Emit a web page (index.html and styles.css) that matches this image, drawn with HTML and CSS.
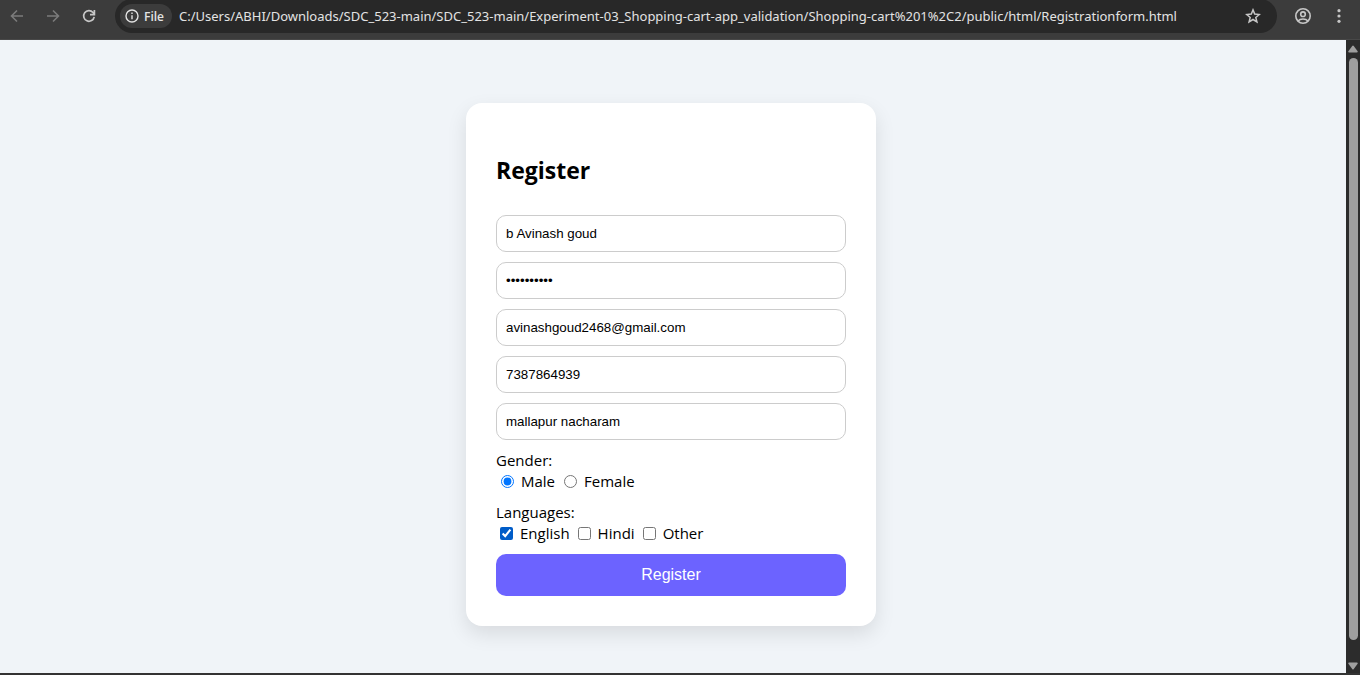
FILE: index.html
```html
<!DOCTYPE html>
<html lang="en">
<head>
<meta charset="utf-8">
<title>Register</title>
<link rel="stylesheet" href="styles.css">
</head>
<body>
<header class="toolbar">
  <button class="icon-button dim" type="button" aria-label="Back">
    <svg width="16" height="16" viewBox="0 0 16 16" fill="none" stroke="currentColor" stroke-width="1.6"><path d="M14 8H3M8 2.5 2.5 8 8 13.5"/></svg>
  </button>
  <button class="icon-button dim" type="button" aria-label="Forward">
    <svg width="16" height="16" viewBox="0 0 16 16" fill="none" stroke="currentColor" stroke-width="1.6"><path d="M2 8h11M8 2.5 13.5 8 8 13.5"/></svg>
  </button>
  <button class="icon-button" type="button" aria-label="Reload">
    <svg width="16" height="16" viewBox="0 0 16 16" fill="none" stroke="currentColor" stroke-width="1.7"><path d="M13.2 8.8A5.3 5.3 0 1 1 12 4.5L13.5 6.2M13.4 2v4.6H9"/></svg>
  </button>
  <div class="address">
    <button class="chip" type="button">
      <svg width="14" height="14" viewBox="0 0 14 14" fill="none" stroke="currentColor" stroke-width="1.4"><circle cx="7" cy="7" r="6"/><path d="M7 6.2v4M7 3.6v1.5"/></svg>
      File
    </button>
    <input class="url" type="text" aria-label="Address" value="C:/Users/ABHI/Downloads/SDC_523-main/SDC_523-main/Experiment-03_Shopping-cart-app_validation/Shopping-cart%201%2C2/public/html/Registrationform.html">
    <button class="icon-button star" type="button" aria-label="Bookmark">
      <svg width="16" height="16" viewBox="0 0 16 16" fill="none" stroke="currentColor" stroke-width="1.5"><path d="m8 1.9 1.7 4.2 4.6.4-3.5 3 1.1 4.4L8 11.5l-3.9 2.4 1.1-4.4-3.5-3 4.6-.4z"/></svg>
    </button>
  </div>
  <button class="icon-button" type="button" aria-label="Profile">
    <svg width="18" height="18" viewBox="0 0 18 18" fill="none" stroke="currentColor" stroke-width="1.6"><circle cx="9" cy="9" r="7.2"/><circle cx="9" cy="7.2" r="2.3"/><path d="M4 14c2.4-2.7 7.600-2.700 10 0"/></svg>
  </button>
  <button class="icon-button" type="button" aria-label="Menu">
    <svg width="16" height="16" viewBox="0 0 16 16" fill="currentColor"><circle cx="8" cy="2.700" r="1.600"/><circle cx="8" cy="8" r="1.600"/><circle cx="8" cy="13.300" r="1.600"/></svg>
  </button>
</header>
<div class="viewport">
  <main class="page">
    <form class="card">
      <h2 class="title">Register</h2>
      <input class="field" type="text" aria-label="Name" value="b Avinash goud">
      <input class="field" type="password" aria-label="Password" value="abcdefghij">
      <input class="field" type="email" aria-label="Email" value="avinashgoud2468@gmail.com">
      <input class="field" type="tel" aria-label="Phone" value="7387864939">
      <input class="field" type="text" aria-label="Address" value="mallapur nacharam">
      <div class="group" role="radiogroup" aria-labelledby="gender">
        <div id="gender">Gender:</div>
        <div class="choices">
          <label class="choice"><input class="radio" type="radio" name="gender" checked>Male</label>
          <label class="choice"><input class="radio" type="radio" name="gender">Female</label>
        </div>
      </div>
      <div class="group" role="group" aria-labelledby="languages">
        <div id="languages">Languages:</div>
        <div class="choices">
          <label class="choice"><input class="check" type="checkbox" checked>English</label>
          <label class="choice"><input class="check" type="checkbox">Hindi</label>
          <label class="choice"><input class="check" type="checkbox">Other</label>
        </div>
      </div>
      <button class="submit" type="submit">Register</button>
    </form>
  </main>
  <div class="scrollbar" aria-hidden="true">
    <svg width="10" height="8" viewBox="0 0 10 8" fill="#9f9f9f"><path d="M4.200 1q.8-1 1.600 0l3.800 5.200q.6 1.300-.8 1.300H1.200Q-.2 7.500.4 6.200z"/></svg>
    <div class="track"><div class="thumb"></div></div>
    <svg width="10" height="8" viewBox="0 0 10 8" fill="#9f9f9f"><path d="M4.200 7q.8 1 1.600 0l3.800-5.200q.6-1.300-.8-1.300H1.200Q-.2.500.4 1.800z"/></svg>
  </div>
</div>
</body>
</html>
```
FILE: styles.css
```css
* {
  box-sizing: border-box;
}

body {
  margin: 0;
  min-height: 100vh;
  display: flex;
  flex-direction: column;
  font-family: "Open Sans", "Noto Sans", sans-serif;
  font-size: 15px;
  line-height: 21px;
  color: #000;
  background: #f0f4f8;
  border-bottom: 2px solid #333;
}

.toolbar {
  display: flex;
  align-items: center;
  gap: 12px;
  height: 40px;
  padding: 0 9px 7px 5px;
  background: #3c3c3c;
  border-bottom: 1px solid #484848;
}

.icon-button {
  display: flex;
  align-items: center;
  justify-content: center;
  width: 24px;
  height: 24px;
  padding: 0;
  border: 0;
  background: none;
  color: #c7c7c7;
}

.dim {
  color: #7b7b7b;
}

.address {
  flex: 1;
  display: flex;
  align-items: center;
  height: 34px;
  margin: 0 2px;
  padding: 0 12px 0 5px;
  border-radius: 17px;
  background: #282828;
}

.chip {
  display: flex;
  align-items: center;
  gap: 5px;
  height: 24px;
  padding: 0 8px 0 5px;
  border: 0;
  border-radius: 12px;
  background: #3c3c3c;
  color: #e3e3e3;
  font: 600 12px "Open Sans", "Noto Sans", sans-serif;
}

.url {
  flex: 1;
  min-width: 0;
  padding: 0 7px;
  border: 0;
  background: none;
  color: #e3e3e3;
  font: 13px "Noto Sans", "Open Sans", sans-serif;
}

.viewport {
  flex: 1;
  display: flex;
}

.page {
  flex: 1;
  display: flex;
  justify-content: center;
  align-items: flex-start;
  padding: 63px 24px 47px 20px;
}

.card {
  width: 100%;
  max-width: 410px;
  display: flex;
  flex-direction: column;
  gap: 10px;
  padding: 30px;
  border-radius: 16px;
  background: #fff;
  box-shadow: 0 8px 20px rgba(0, 0, 0, 0.1);
}

.title {
  margin: 20px 0 18px;
  font-size: 23px;
  line-height: 34px;
  font-weight: 700;
}

.field {
  width: 100%;
  height: 37px;
  padding: 0 9px;
  border: 1px solid #ccc;
  border-radius: 10px;
  background: #fff;
  color: #000;
  font-family: "Liberation Sans", Arial, sans-serif;
}

.choices {
  display: flex;
  gap: 4px;
}

.choice {
  display: flex;
  align-items: center;
}

.radio {
  margin: 0 7px 0 5px;
}

.check {
  margin: 0 7px 0 4px;
  accent-color: #005cc8;
}

.submit {
  height: 42px;
  border: 0;
  border-radius: 10px;
  background: #6c63ff;
  color: #fff;
  font: 16px "Liberation Sans", Arial, sans-serif;
}

.scrollbar {
  display: flex;
  flex-direction: column;
  align-items: center;
  width: 14px;
  padding: 5px 0 3px;
  background: #2c2c2c;
}

.track {
  flex: 1;
  width: 9px;
  padding: 5px 0 22px;
  display: flex;
}

.thumb {
  flex: 1;
  border-radius: 5px;
  background: #9f9f9f;
}
```
